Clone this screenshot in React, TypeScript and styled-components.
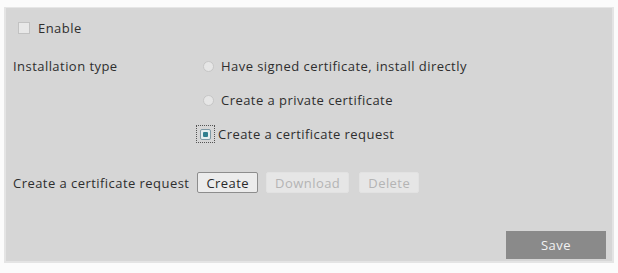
import React from "react";
import styled, { createGlobalStyle } from "styled-components";

const Global = createGlobalStyle`
  html, body { margin: 0; padding: 0; background: #ffffff; }
  body { font-family: "Open Sans", "Liberation Sans", sans-serif; }
`;

const Page = styled.div`
  width: 618px;
  height: 273px;
  padding: 7px 4px 10px 4px;
  box-sizing: border-box;
  background: #fbfbfb;
`;

const Panel = styled.div`
  height: 100%;
  box-sizing: border-box;
  background: #d6d6d6;
  border: 2px solid #e4e4e4;
  border-top: 1px solid #e6e6e6;
  padding: 10px 6px 0 7px;
  display: flex;
  flex-direction: column;
  color: #2e2e2e;
  font-size: 13px;
  letter-spacing: 0.45px;
`;

const Row = styled.div<{ $mt?: number; $top?: boolean }>`
  display: flex;
  align-items: ${(p) => (p.$top ? "flex-start" : "center")};
  margin-top: ${(p) => p.$mt ?? 0}px;
  min-height: 20px;
`;

const Check = styled.span`
  width: 10px;
  height: 10px;
  border: 1px solid #c2c2c2;
  background: #e8e8e8;
  margin-left: 5px;
  margin-right: 8px;
  display: inline-flex;
  align-items: center;
  justify-content: center;
`;

const Label = styled.span<{ $w?: number; $mr?: number }>`
  width: ${(p) => (p.$w ? `${p.$w}px` : "auto")};
  margin-right: ${(p) => p.$mr ?? 0}px;
  flex-shrink: 0;
  white-space: nowrap;
  line-height: 20px;
`;

const Options = styled.div`
  display: flex;
  flex-direction: column;
  gap: 14px;
`;

const Option = styled.div`
  display: flex;
  align-items: center;
  height: 20px;
  white-space: nowrap;
`;

const RadioWrap = styled.span<{ $focus?: boolean }>`
  width: ${(p) => (p.$focus ? "19px" : "16px")};
  height: ${(p) => (p.$focus ? "18px" : "16px")};
  box-sizing: border-box;
  margin-left: ${(p) => (p.$focus ? "-4px" : "0")};
  margin-right: ${(p) => (p.$focus ? "3px" : "5px")};
  border: ${(p) => (p.$focus ? "1px dotted #555" : "none")};
  display: inline-flex;
  align-items: center;
  justify-content: center;
`;

const Radio = styled.span<{ $on?: boolean }>`
  width: 9px;
  height: 9px;
  border-radius: ${(p) => (p.$on ? "2px" : "50%")};
  border: 1px solid ${(p) => (p.$on ? "#7f9aa6" : "#c6c6c6")};
  background: ${(p) => (p.$on ? "#e4eef0" : "#e6e6e6")};
  display: inline-flex;
  align-items: center;
  justify-content: center;
`;

const Dot = styled.span`
  width: 5px;
  height: 5px;
  background: #2f7f8f;
  border-radius: 1px;
`;

const Btn = styled.button<{ $disabled?: boolean; $mr?: number }>`
  font-family: inherit;
  font-size: 13px;
  letter-spacing: 0.45px;
  height: 21px;
  padding: 0 8px;
  margin-right: ${(p) => p.$mr ?? 8}px;
  border: 1px solid ${(p) => (p.$disabled ? "#e2e2e2" : "#8d8d8d")};
  border-radius: 2px;
  background: ${(p) => (p.$disabled ? "#e6e6e6" : "#ececec")};
  color: ${(p) => (p.$disabled ? "#b4b4b4" : "#2a2a2a")};
  box-sizing: border-box;
`;

const Footer = styled.div`
  margin-top: auto;
  display: flex;
  justify-content: flex-end;
  padding-bottom: 2px;
`;

const Save = styled.button`
  width: 100px;
  height: 28px;
  border: none;
  background: #8a8a8a;
  color: #f2f2f2;
  font-family: inherit;
  font-size: 13px;
  letter-spacing: 0.45px;
`;

export default function App() {
  return (
    <>
      <Global />
      <Page>
        <Panel>
          <Row>
            <Check />
            <Label>Enable</Label>
          </Row>
          <Row $mt={18} $top>
            <Label $w={187}>Installation type</Label>
            <Options>
              <Option>
                <RadioWrap><Radio /></RadioWrap>
                Have signed certificate, install directly
              </Option>
              <Option>
                <RadioWrap><Radio /></RadioWrap>
                Create a private certificate
              </Option>
              <Option>
                <RadioWrap $focus><Radio $on><Dot /></Radio></RadioWrap>
                Create a certificate request
              </Option>
            </Options>
          </Row>
          <Row $mt={28}>
            <Label $mr={8}>Create a certificate request</Label>
            <Btn>Create</Btn>
            <Btn $disabled $mr={10}>Download</Btn>
            <Btn $disabled>Delete</Btn>
          </Row>
          <Footer>
            <Save>Save</Save>
          </Footer>
        </Panel>
      </Page>
    </>
  );
}
